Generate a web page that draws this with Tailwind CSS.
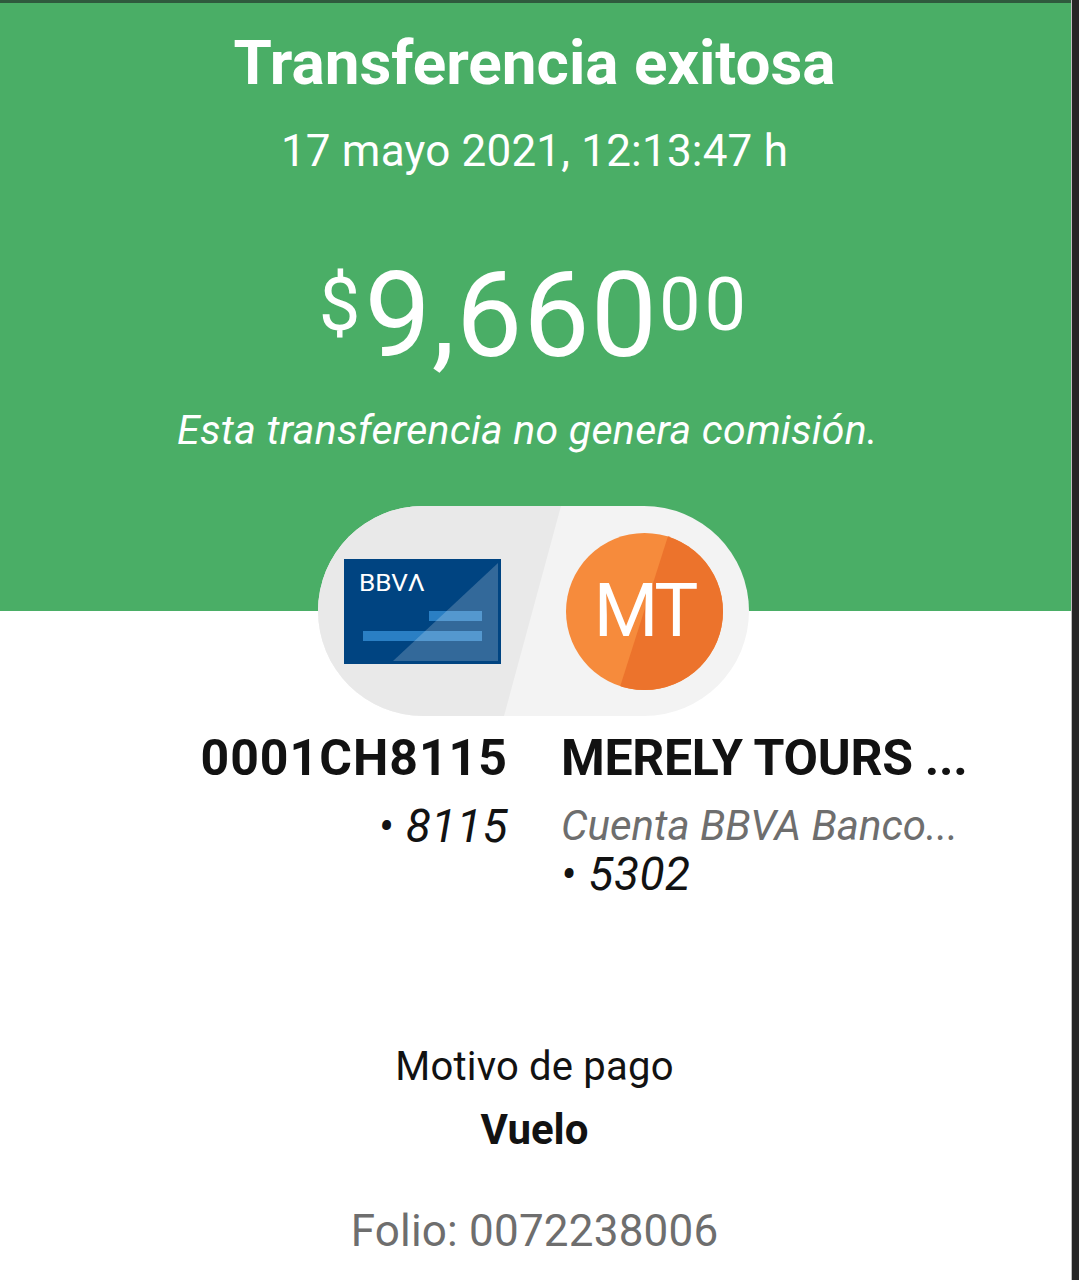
<!DOCTYPE html>
<html lang="es">
<head>
    <meta charset="UTF-8">
    <meta name="viewport" content="width=device-width, initial-scale=1.0">
    <title>Transferencia exitosa</title>
    <script src="https://cdn.jsdelivr.net/npm/@tailwindcss/browser@4"></script>
</head>
<body class="bg-[#262626] h-[1280px] overflow-hidden font-['Roboto',sans-serif]">
    <div class="flex h-[1280px]">
        <main class="w-[1072px] bg-white border-r border-[#bdbdbd]">
            <!-- Green header -->
            <section class="bg-[#4aae66] border-t-[3px] border-[#2f5a3d] h-[611px] pr-[2px] flex flex-col items-center text-white">
                <h1 class="mt-[22px] h-[76px] leading-[76px] text-[62px] font-bold">Transferencia exitosa</h1>
                <p class="mt-[24px] h-[52px] leading-[52px] text-[44px] font-normal tracking-[0.2px]">17 mayo 2021, 12:13:47 h</p>
                <div class="mt-[85px] h-[120px] flex items-start leading-none font-normal">
                    <span class="text-[74px] mt-[6px] mr-[4px]">$</span>
                    <span class="text-[118px] -mt-[5px] tracking-[1px]">9,660</span>
                    <span class="text-[74px] mt-[6px] ml-[1px] tracking-[4px]">00</span>
                </div>
                <p class="mt-[30px] mr-[14px] h-[50px] leading-[50px] text-[41px] italic font-normal tracking-[0.3px]">Esta transferencia no genera comisión.</p>
                <!-- Accounts pill -->
                <div class="relative mt-[51px] mr-[2px] w-[431px] h-[210px] rounded-full overflow-hidden bg-[#f3f3f3] shrink-0 flex items-center">
                    <svg class="absolute inset-0" width="431" height="210" viewBox="0 0 431 210">
                        <polygon points="0,0 243,0 186,210 0,210" fill="#e9e9e9"/>
                    </svg>
                    <svg class="relative ml-[26px]" width="157" height="105" viewBox="0 0 157 105">
                        <rect width="157" height="105" fill="#004481"/>
                        <rect x="19" y="72" width="119" height="10" fill="#2a7fc4"/>
                        <rect x="85" y="52" width="53" height="10" fill="#2a7fc4"/>
                        <polygon points="154,4 154,102 49,102" fill="#fff" fill-opacity="0.2"/>
                        <text x="15" y="32" font-family="Roboto, sans-serif" font-size="23" fill="#fff" textLength="66" lengthAdjust="spacingAndGlyphs">BBVΛ</text>
                    </svg>
                    <div class="relative ml-[65px] w-[157px] h-[157px] rounded-full overflow-hidden bg-[#f68b3c] flex items-center justify-center">
                        <svg class="absolute inset-0" width="157" height="157" viewBox="0 0 157 157">
                            <polygon points="103,0 157,0 157,157 53,157" fill="#ec732c"/>
                        </svg>
                        <span class="relative text-white text-[74px] font-normal leading-none tracking-[-3px]">MT</span>
                    </div>
                </div>
            </section>

            <!-- Origin and destination -->
            <section class="mt-[120px] grid grid-cols-[508px_1fr] gap-x-[53px] text-[#121212]">
                <div class="text-right">
                    <p class="h-[54px] leading-[54px] text-[50px] font-bold tracking-[1px]">0001CH8115</p>
                    <p class="mt-[17px] h-[48px] leading-[48px] text-[46px] italic font-normal tracking-[0.5px]">• 8115</p>
                </div>
                <div>
                    <p class="h-[54px] leading-[54px] text-[50px] font-bold whitespace-nowrap tracking-[-0.3px]">MERELY TOURS ...</p>
                    <p class="mt-[17px] h-[48px] leading-[48px] text-[42px] italic font-normal text-[#6e6e6e] whitespace-nowrap">Cuenta BBVA Banco...</p>
                    <p class="h-[48px] leading-[48px] text-[46px] italic font-normal tracking-[0.5px]">• 5302</p>
                </div>
            </section>

            <!-- Payment details -->
            <section class="mt-[144px] pr-[2px] flex flex-col items-center">
                <p class="h-[50px] leading-[50px] text-[40px] font-normal text-[#121212] tracking-[0.2px]">Motivo de pago</p>
                <p class="mt-[13px] h-[50px] leading-[50px] text-[42px] font-bold text-[#121212]">Vuelo</p>
                <p class="mt-[51px] h-[50px] leading-[50px] text-[44px] font-normal text-[#6e6e6e] tracking-[0.2px]">Folio: 0072238006</p>
            </section>
        </main>
    </div>
</body>
</html>
